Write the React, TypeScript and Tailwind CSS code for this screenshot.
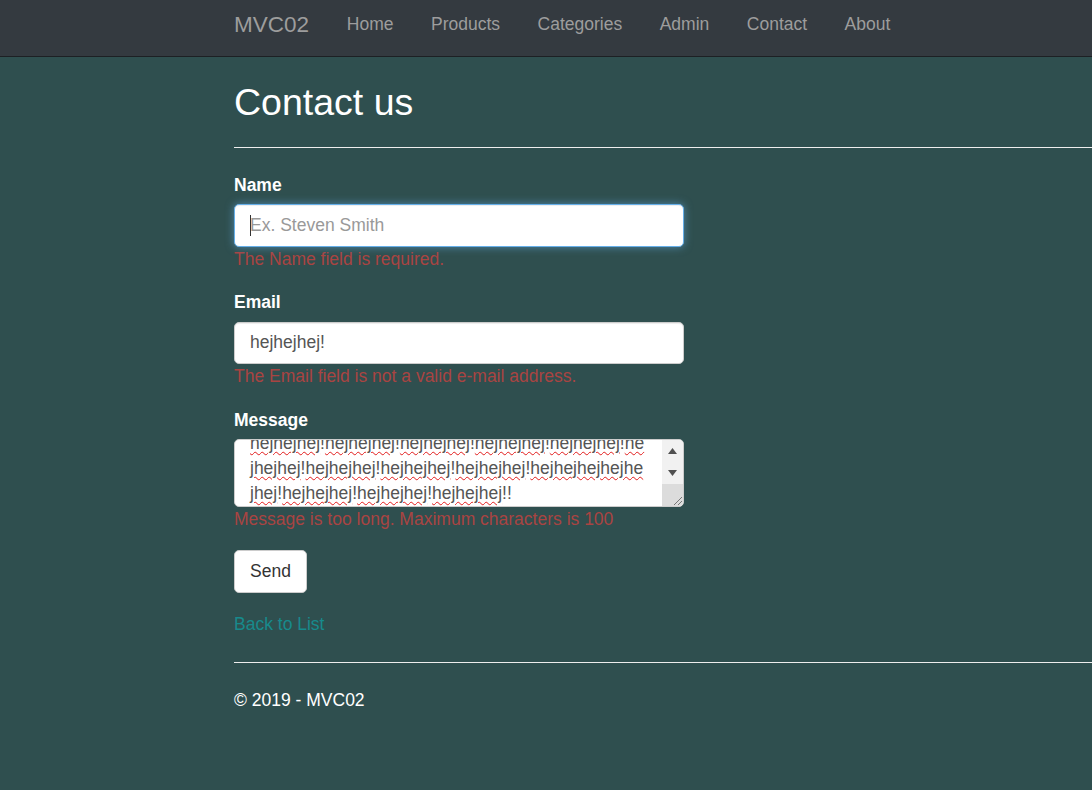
import React from "react";

const navLinks = ["Home", "Products", "Categories", "Admin", "Contact", "About"];

function Squiggle({ children }: { children: React.ReactNode }) {
  return (
    <span className="underline decoration-wavy decoration-[#e21b1b] decoration-1 underline-offset-[2px]">
      {children}
    </span>
  );
}

const messageLines: string[][] = [
  ["hejhejhej", "!", "hejhejhej", "!", "hejhejhej", "!", "hejhejhej", "!", "hejhejhej", "!", "he"],
  ["jhejhej", "!", "hejhejhej", "!", "hejhejhej", "!", "hejhejhej", "!", "hejhejhejhejhe"],
  ["jhej", "!", "hejhejhej", "!", "hejhejhej", "!", "hejhejhej", "!!"],
];

export default function App() {
  return (
    <div className="min-h-[790px] bg-[#2f4f4f] text-[17.5px] leading-[25px] text-white font-['Liberation_Sans',Arial,sans-serif]">
      {/* navbar */}
      <nav className="h-[57px] bg-[#343a40] border-b border-[#1d2024]">
        <div className="flex items-start pl-[234px] pt-[11.5px] text-[#9d9d9d]">
          <span className="text-[22.5px] leading-[25px] pr-[19px]">MVC02</span>
          {navLinks.map((l) => (
            <span key={l} className="px-[18.75px]">{l}</span>
          ))}
        </div>
      </nav>

      <main className="pl-[234px]">
        <h2 className="mt-[24.5px] text-[37.5px] leading-[41.25px] text-white">Contact us</h2>
        <hr className="mt-[24.5px] border-0 border-t border-[#eeeeee]" />

        <form className="w-[450px]">
          {/* name */}
          <div className="mt-[24.5px]">
            <label className="block font-bold mb-[6.25px]">Name</label>
            <div className="relative">
              <input
                readOnly
                placeholder="Ex. Steven Smith"
                className="block w-full h-[42.5px] px-[15px] bg-white rounded-[5px] border border-[#66afe9] text-[#555] placeholder:text-[#999] outline-none shadow-[inset_0_1px_1px_rgba(0,0,0,0.075),0_0_8px_rgba(102,175,233,0.6)]"
              />
              <span className="absolute left-[16px] top-[11px] h-[21px] w-px bg-[#333]" />
            </div>
            <span className="block text-[#a94442]">The Name field is required.</span>
          </div>

          {/* email */}
          <div className="mt-[18.75px]">
            <label className="block font-bold mb-[6.25px]">Email</label>
            <input
              readOnly
              value="hejhejhej!"
              className="block w-full h-[42.5px] px-[15px] bg-white rounded-[5px] border border-[#ccc] text-[#555] outline-none shadow-[inset_0_1px_1px_rgba(0,0,0,0.075)]"
            />
            <span className="block text-[#a94442]">The Email field is not a valid e-mail address.</span>
          </div>

          {/* message */}
          <div className="mt-[18.75px]">
            <label className="block font-bold mb-[6.25px]">Message</label>
            <div className="flex h-[67.5px] bg-white rounded-[5px] border border-[#ccc] overflow-hidden">
              <div className="flex-1 overflow-hidden pl-[15px] text-[#555]">
                <div className="-mt-[9px]">
                  {messageLines.map((line, i) => (
                    <div key={i} className="whitespace-nowrap">
                      {line.map((part, j) =>
                        part.startsWith("!") ? <span key={j}>{part}</span> : <Squiggle key={j}>{part}</Squiggle>
                      )}
                    </div>
                  ))}
                </div>
              </div>
              {/* scrollbar */}
              <div className="w-[21px] flex flex-col bg-[#f1f1f1]">
                <div className="h-[22px] flex items-center justify-center">
                  <svg width="9" height="6" viewBox="0 0 9 6"><path d="M0 6 L4.5 0 L9 6 Z" fill="#505050" /></svg>
                </div>
                <div className="h-[22px] flex items-center justify-center">
                  <svg width="9" height="6" viewBox="0 0 9 6"><path d="M0 0 L4.5 6 L9 0 Z" fill="#505050" /></svg>
                </div>
                <div className="flex-1 bg-[#dcdcdc] flex items-end justify-end">
                  <svg width="12" height="12" viewBox="0 0 12 12">
                    <path d="M11 3 L3 11 M11 7 L7 11" stroke="#777" strokeWidth="1" />
                  </svg>
                </div>
              </div>
            </div>
            <span className="block text-[#a94442]">Message is too long. Maximum characters is 100</span>
          </div>

          <button
            type="button"
            className="mt-[18.75px] block h-[42.5px] px-[15px] bg-white text-[#333] border border-[#ccc] rounded-[5px]"
          >
            Send
          </button>
        </form>

        <div className="mt-[19.5px]">
          <a className="text-[#178a8c]">Back to List</a>
        </div>

        <hr className="mt-[25px] border-0 border-t border-[#eeeeee]" />
        <footer className="mt-[24.5px]">
          <p>&copy; 2019 - MVC02</p>
        </footer>
      </main>
    </div>
  );
}
